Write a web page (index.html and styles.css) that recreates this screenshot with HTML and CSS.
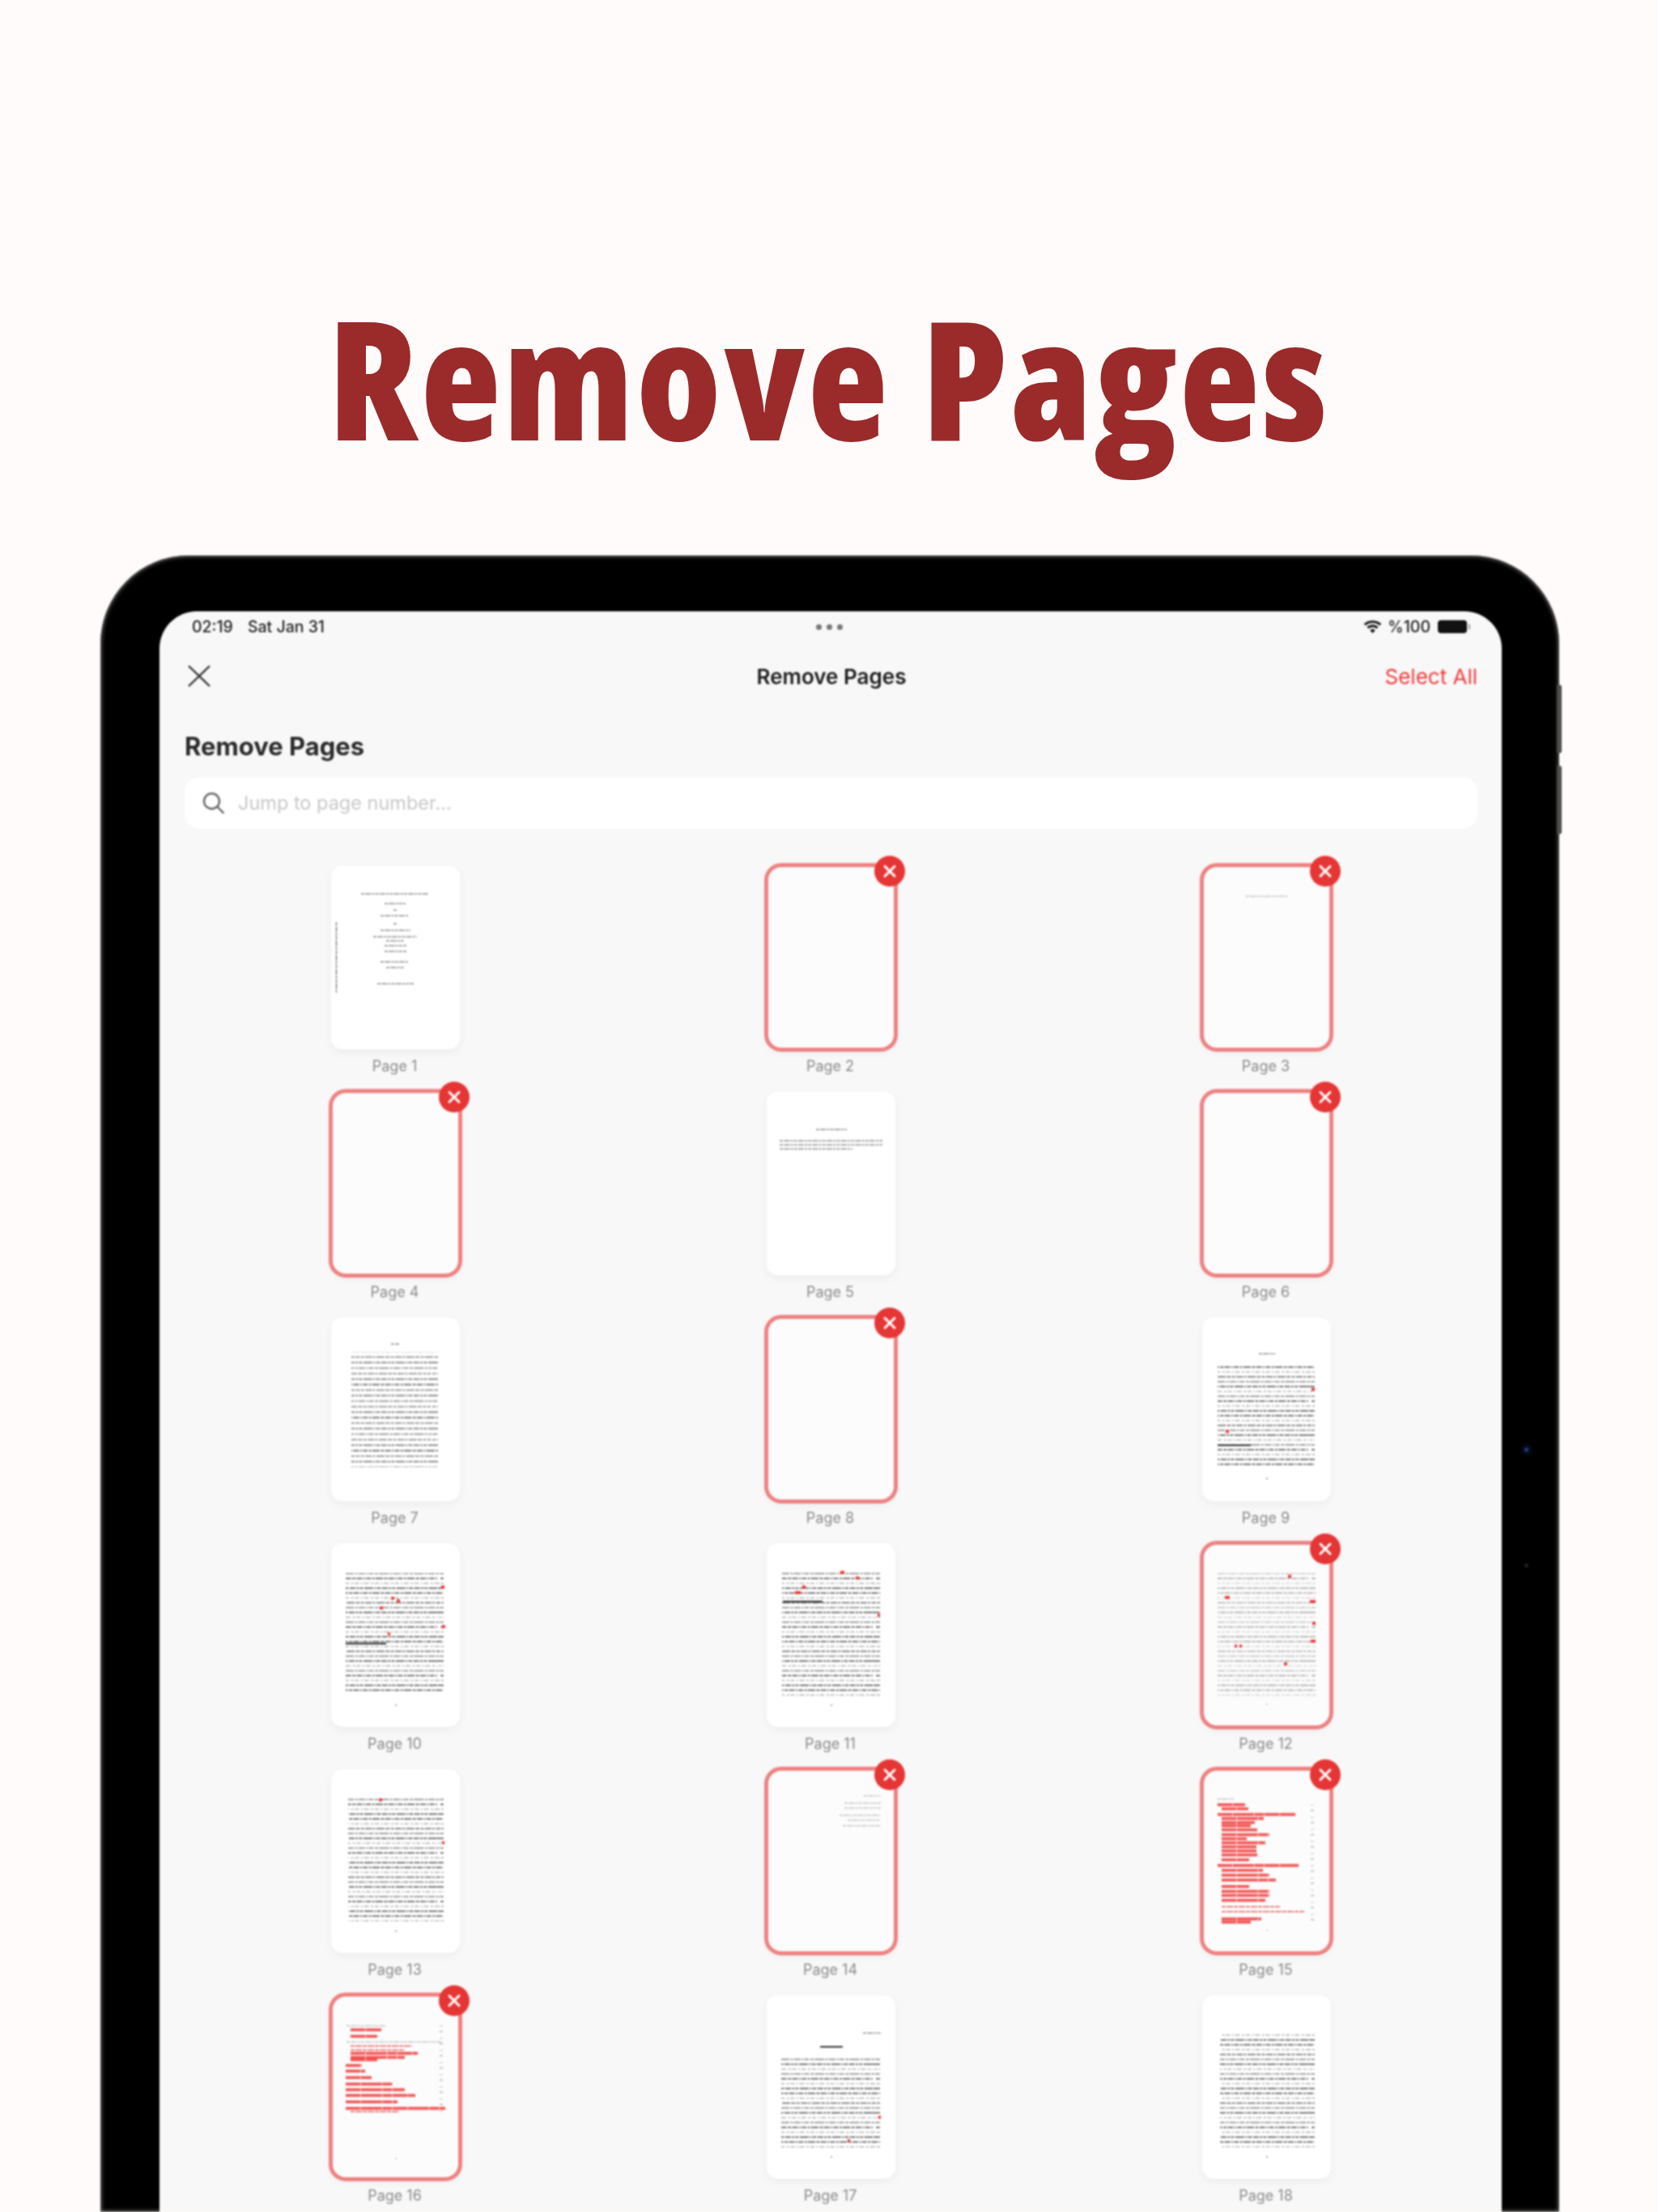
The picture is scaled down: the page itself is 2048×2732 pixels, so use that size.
FILE: index.html
```html
<!DOCTYPE html>
<html lang="en">
<head>
<meta charset="utf-8">
<title>Remove Pages</title>
<link rel="stylesheet" href="styles.css">
</head>
<body>
<svg class="defs" width="0" height="0" aria-hidden="true">
  <defs>
    <pattern id="tx" patternUnits="userSpaceOnUse" width="122" height="40.800">
      <path class="tx-a" d="M0 1.500h122"/>
      <path class="tx-b" d="M0 8.300h122"/>
      <path class="tx-d" d="M0 15.100h122"/>
      <path class="tx-e" d="M0 21.900h122"/>
      <path class="tx-b" d="M3 28.700h119"/>
      <path class="tx-d" d="M0 35.500h122"/>
    </pattern>
    <pattern id="ty" patternUnits="userSpaceOnUse" width="131" height="60">
      <path class="tx-a" d="M0 1.500h131"/>
      <path class="tx-c" d="M0 7.500h131"/>
      <path class="tx-b" d="M0 13.500h131"/>
      <path class="tx-e" d="M0 19.500h131"/>
      <path class="tx-d" d="M0 25.500h131"/>
      <path class="tx-c" d="M2 31.500h129"/>
      <path class="tx-e" d="M0 37.500h131"/>
      <path class="tx-a" d="M4 43.500h127"/>
      <path class="tx-c" d="M0 49.500h131"/>
      <path class="tx-d" d="M1 55.500h130"/>
    </pattern>
  </defs>
</svg>
<h1 class="headline">Remove Pages</h1>
<main class="device">
  <span class="side-button side-one"></span>
  <span class="side-button side-two"></span>
  <span class="sensor sensor-blue"></span>
  <span class="sensor sensor-dim"></span>
  <div class="screen">
    <div class="status">
      <div class="status-left"><span>02:19</span><span>Sat Jan 31</span></div>
      <div class="dots"><i></i><i></i><i></i></div>
      <div class="status-right">
        <svg class="wifi" viewBox="0 0 24 18"><path d="M12 17 8.600 13.200a5 5 0 0 1 6.800 0zM6.600 11 4.500 8.800a11 11 0 0 1 15 0L17.400 11a8 8 0 0 0-10.800 0zM2.700 7 .6 4.800a17 17 0 0 1 22.800 0L21.300 7a14 14 0 0 0-18.600 0z"/></svg>
        <span>%100</span>
        <span class="battery"></span>
      </div>
    </div>
    <nav class="nav">
      <svg class="close" viewBox="0 0 30 28"><path d="M2 1.500 28 26.500M28 1.500 2 26.500"/></svg>
      <div class="nav-title">Remove Pages</div>
      <div class="nav-action">Select All</div>
    </nav>
    <h2 class="heading">Remove Pages</h2>
    <div class="search">
      <svg class="search-icon" viewBox="0 0 28 28"><circle cx="11.500" cy="11.500" r="9.500"/><path d="m18.500 18.500 8 8"/></svg>
      <span>Jump to page number...</span>
    </div>
    <section class="grid">
      <figure class="item"><div class="page">
        <svg class="thumb" viewBox="0 0 159 227"><path class="ink" d="M37 35h83M66 47h26M77 55h5M61 62h34M77 72h5M61 80h37M52 88h54M68 93h22M66 99h27M66 106h27M61 119h34M68 126h23M57 146h45"/><path class="ink-v" d="M6.500 70v88"/></svg>
      </div><figcaption>Page 1</figcaption></figure>
      <figure class="item"><div class="page selected"><svg class="thumb" viewBox="0 0 159 227"></svg><svg class="badge" viewBox="0 0 38 38"><circle cx="19" cy="19" r="19"/><path d="m13 13 12 12M25 13 13 25"/></svg></div><figcaption>Page 2</figcaption></figure>
      <figure class="item"><div class="page selected"><svg class="thumb" viewBox="0 0 159 227"><path class="ink" d="M54 38h52"/></svg><svg class="badge" viewBox="0 0 38 38"><circle cx="19" cy="19" r="19"/><path d="m13 13 12 12M25 13 13 25"/></svg></div><figcaption>Page 3</figcaption></figure>

      <figure class="item"><div class="page selected"><svg class="thumb" viewBox="0 0 159 227"></svg><svg class="badge" viewBox="0 0 38 38"><circle cx="19" cy="19" r="19"/><path d="m13 13 12 12M25 13 13 25"/></svg></div><figcaption>Page 4</figcaption></figure>
      <figure class="item"><div class="page">
        <svg class="thumb" viewBox="0 0 159 227"><path class="ink" d="M61 47h38M16 61h127M16 66h127M16 71h90"/></svg>
      </div><figcaption>Page 5</figcaption></figure>
      <figure class="item"><div class="page selected"><svg class="thumb" viewBox="0 0 159 227"></svg><svg class="badge" viewBox="0 0 38 38"><circle cx="19" cy="19" r="19"/><path d="m13 13 12 12M25 13 13 25"/></svg></div><figcaption>Page 6</figcaption></figure>

      <figure class="item"><div class="page">
        <svg class="thumb" viewBox="0 0 159 227"><path class="ink" d="M74 33h10"/><rect x="25" y="43" width="107" height="142" fill="url(#tx)"/></svg>
      </div><figcaption>Page 7</figcaption></figure>
      <figure class="item"><div class="page selected"><svg class="thumb" viewBox="0 0 159 227"></svg><svg class="badge" viewBox="0 0 38 38"><circle cx="19" cy="19" r="19"/><path d="m13 13 12 12M25 13 13 25"/></svg></div><figcaption>Page 8</figcaption></figure>
      <figure class="item"><div class="page">
        <svg class="thumb" viewBox="0 0 159 227"><path class="ink" d="M70 45h20M79 199h2"/><rect x="19" y="59" width="120" height="126" fill="url(#ty)"/><path class="rule" d="M19 158h41"/><path class="mark" d="M135 89h4M29 141h4"/></svg>
      </div><figcaption>Page 9</figcaption></figure>

      <figure class="item"><div class="page">
        <svg class="thumb" viewBox="0 0 159 227"><rect x="18" y="37" width="121" height="149" fill="url(#ty)"/><path class="ink" d="M79 200h2"/><path class="rule" d="M18 124h50"/><path class="mark" d="M136 54h4M74 68h4M81 71h4M60 80h4M137 103h4M70 112h3"/></svg>
      </div><figcaption>Page 10</figcaption></figure>
      <figure class="item"><div class="page">
        <svg class="thumb" viewBox="0 0 159 227"><rect x="19" y="36" width="121" height="153" fill="url(#ty)"/><path class="ink" d="M79 200h2"/><path class="rule" d="M20 72h49"/><path class="mark" d="M91 36h5M110 43h4M44 54h4M35 61h7M137 89h3"/></svg>
      </div><figcaption>Page 11</figcaption></figure>
      <figure class="item"><div class="page selected">
        <svg class="thumb" viewBox="0 0 159 227"><rect x="19" y="37" width="121" height="154" fill="url(#ty)"/><path class="ink" d="M79 199h2"/><path class="mark" d="M106 41h4M28 67h6M133 72h7M136 99h4M134 121h6M40 127h3M46 127h3M101 149h4"/></svg>
        <svg class="badge" viewBox="0 0 38 38"><circle cx="19" cy="19" r="19"/><path d="m13 13 12 12M25 13 13 25"/></svg>
      </div><figcaption>Page 12</figcaption></figure>

      <figure class="item"><div class="page">
        <svg class="thumb" viewBox="0 0 159 227"><rect x="21" y="33" width="118" height="155" fill="url(#ty)"/><path class="ink" d="M79 200h2"/><path class="mark" d="M59 38h4M137 91h3"/></svg>
      </div><figcaption>Page 13</figcaption></figure>
      <figure class="item"><div class="page selected">
        <svg class="thumb" viewBox="0 0 159 227"><path class="ink" d="M120 33h20M96 42h45M96 48h45M90 57h50M100 63h40M94 70h46"/></svg>
        <svg class="badge" viewBox="0 0 38 38"><circle cx="19" cy="19" r="19"/><path d="m13 13 12 12M25 13 13 25"/></svg>
      </div><figcaption>Page 14</figcaption></figure>
      <figure class="item"><div class="page selected">
        <svg class="thumb" viewBox="0 0 159 227"><path class="ink" d="M19 37h20M79 199h2"/><path class="hl" d="M19 44h34M24 49h33M19 56h96M24 61h52M24 66h41M24 70h36M24 75h44M24 81h59M24 86h31M24 91h54M24 96h43M24 101h43M24 106h44M24 112h34M19 119h100M24 125h51M24 131h59M24 137h67M24 145h34M24 151h59M24 156h59M24 162h54M24 185h49M24 189h36"/><path class="hl-thin" d="M24 170h72M24 176h102"/><path class="folio" d="M136 44v150"/></svg>
        <svg class="badge" viewBox="0 0 38 38"><circle cx="19" cy="19" r="19"/><path d="m13 13 12 12M25 13 13 25"/></svg>
      </div><figcaption>Page 15</figcaption></figure>

      <figure class="item"><div class="page selected">
        <svg class="thumb" viewBox="0 0 159 227"><path class="ink" d="M79 202h2M19 38h49M19 58h117"/><path class="hl" d="M24 43h38M24 51h33M24 72h83M24 77h67M24 80h33M18 87h20M18 94h24M18 102h32M18 110h58M18 117h73M18 124h86M18 132h64M18 140h123"/><path class="hl-thin" d="M24 63h76M24 68h67M24 144h60"/><path class="folio" d="M136 38v110"/></svg>
        <svg class="badge" viewBox="0 0 38 38"><circle cx="19" cy="19" r="19"/><path d="m13 13 12 12M25 13 13 25"/></svg>
      </div><figcaption>Page 16</figcaption></figure>
      <figure class="item"><div class="page">
        <svg class="thumb" viewBox="0 0 159 227"><path class="ink" d="M119 47h22M79 200h2"/><path class="title-ink" d="M66 64h28"/><rect x="18" y="77" width="122" height="114" fill="url(#ty)"/><path class="mark" d="M138 151h3M100 180h3"/></svg>
      </div><figcaption>Page 17</figcaption></figure>
      <figure class="item"><div class="page">
        <svg class="thumb" viewBox="0 0 159 227"><rect x="22" y="45" width="117" height="143" fill="url(#ty)"/><path class="ink" d="M79 200h2"/></svg>
      </div><figcaption>Page 18</figcaption></figure>
    </section>
  </div>
</main>
</body>
</html>
```
FILE: styles.css
```css
* { box-sizing: border-box; }
html, body { margin: 0; height: 2732px; overflow: hidden; background: #fffbfa; }
body { font-family: Inter, "Liberation Sans", sans-serif; color: #1f1f1f; }
.defs { position: absolute; }
.tx-a, .tx-b, .tx-c, .tx-d, .tx-e { fill: none; stroke: #4a4a4a; stroke-width: 1.300; }
.tx-a { stroke-dasharray: 6 1.500 3 1.200 9 1.500 4 1.300 7 1.400 2 1.300; }
.tx-b { stroke-dasharray: 4 1.400 8 1.200 3 1.500 10 1.300 5 1.400; opacity: .85; }
.tx-c { stroke-dasharray: 3 1.800 5 2.400 2 1.800 6 2.600; opacity: .45; }
.tx-d { stroke-dasharray: 11 1.300 2 1.200 5 1.400 7 1.300 3 1.200 4 1.500; }
.tx-e { stroke-dasharray: 2 1.200 6 1.600 4 1.200 12 1.500 3 1.300 8 1.400; opacity: .7; }

.headline {
  margin: 0;
  height: 686px;
  padding-top: 349px;
  font-family: "Open Sans", sans-serif;
  font-size: 204px;
  line-height: 232px;
  font-weight: 800;
  font-stretch: 85%;
  letter-spacing: 3.300px;
  text-align: center;
  color: #9b2a2a;
}

.device {
  position: relative;
  width: 1802px;
  height: 2046px;
  margin-left: 124px;
  padding: 69px 71px 0 73px;
  background: #000;
  border-radius: 109px 109px 0 0;
  box-shadow: inset 0 0 5px 1px #777;
  filter: blur(.8px);
}
.side-button { position: absolute; left: 1799px; width: 6px; height: 84px; background: #4d4d4d; border-radius: 0 2px 2px 0; }
.side-one { top: 160px; }
.side-two { top: 260px; }
.sensor { position: absolute; left: 1759px; width: 5px; height: 5px; border-radius: 50%; }
.sensor-blue { top: 1102px; background: #1d3a78; box-shadow: 0 0 6px 2px #0e1e44; }
.sensor-dim { top: 1245px; background: #202020; }

.screen {
  height: 1977px;
  overflow: hidden;
  background: #f8f8f8;
  border-radius: 46px 46px 0 0;
}

.status { display: grid; grid-template-columns: 1fr auto 1fr; align-items: center; height: 38px; padding: 0 43px 0 40px; font-size: 19.500px; font-weight: 500; color: #222; }
.status-left { display: flex; gap: 18px; }
.dots { display: flex; gap: 6px; }
.dots i { width: 7px; height: 7px; border-radius: 50%; background: #777; }
.status-right { display: flex; justify-content: flex-end; align-items: center; gap: 7px; }
.wifi { width: 23px; height: 17px; fill: #111; }
.battery { position: relative; width: 36px; height: 16px; margin-left: 2px; background: #111; border-radius: 4px; }
.battery::after { content: ""; position: absolute; right: -4px; top: 5px; width: 2px; height: 6px; background: #999; }

.nav { display: grid; grid-template-columns: 1fr auto 1fr; align-items: center; height: 84px; padding: 0 30px 0 34px; }
.close { width: 30px; height: 28px; fill: none; stroke: #333; stroke-width: 2.400; }
.nav-title { font-size: 26px; font-weight: 600; color: #1c1c1c; transform: translateX(-1px); }
.nav-action { justify-self: end; font-size: 26px; color: #f23c3c; }

.heading { margin: 25px 31px 0; font-size: 31px; line-height: 40px; font-weight: 700; color: #2a2a2a; }
.search { display: flex; align-items: center; gap: 16px; height: 63px; margin: 18px 30px 0 31px; padding-left: 22px; background: #fff; border-radius: 18px; font-size: 23.500px; color: #c8c8c8; }
.search-icon { width: 28px; height: 28px; fill: none; stroke: #666; stroke-width: 2.400; }

.grid { display: grid; grid-template-columns: repeat(3, 1fr); column-gap: 17px; margin: 46px 30px 0 31px; }
.item { display: flex; flex-direction: column; align-items: center; height: 279px; margin: 0; }
.page { position: relative; width: 159px; height: 227px; background: #fff; border-radius: 14px; box-shadow: 0 4px 12px rgba(0, 0, 0, .05); }
.page.selected { background: #fcfcfc; outline: 5px solid #ee8181; outline-offset: -2px; border-radius: 18px; }
.thumb { display: block; width: 159px; height: 227px; filter: blur(.4px); }
.selected rect, .selected .ink { opacity: .5; }
figcaption { margin-top: 7px; font-size: 18px; line-height: 28px; color: #8b8b8b; transform: translateX(-1px); }

.ink, .ink-v { fill: none; stroke: #555; stroke-width: 1.100; stroke-dasharray: 4 1.200 7 1.200 3 1.200; }
.title-ink { fill: none; stroke: #333; stroke-width: 2; }
.rule { fill: none; stroke: #333; stroke-width: 1.800; }
.mark { fill: none; stroke: #f02c2c; stroke-width: 3.400; }
.hl { fill: none; stroke: #f25050; stroke-width: 3.600; stroke-dasharray: 18 .7 26 .7 12 .7; }
.hl-thin { fill: none; stroke: #e85a5a; stroke-width: 1.400; stroke-dasharray: 5 1 8 1; }
.folio { fill: none; stroke: #777; stroke-width: 4; stroke-dasharray: 1 5 2 7; opacity: .4; }

.badge { position: absolute; top: -12px; right: -12px; width: 38px; height: 38px; fill: #e53535; stroke: none; }
.badge path { fill: none; stroke: #fff; stroke-width: 3; stroke-linecap: round; }
```
